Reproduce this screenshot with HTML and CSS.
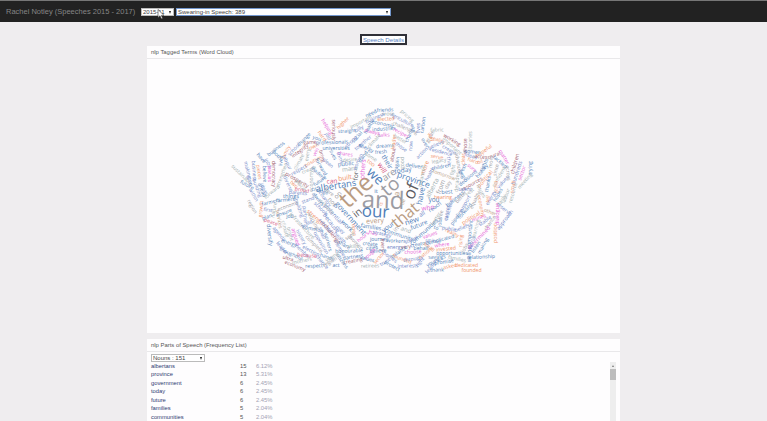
FILE: index.html
```html
<!DOCTYPE html>
<html lang="en">
<head>
<meta charset="utf-8">
<title>Rachel Notley (Speeches 2015 - 2017)</title>
<link rel="stylesheet" href="styles.css">
</head>
<body>
<header class="bar">
  <h1 class="title">Rachel Notley (Speeches 2015 - 2017)</h1>
  <div class="select month"><span>2015-11</span><i class="arrow"></i>
    <svg class="cursor" width="8" height="11" viewBox="0 0 8 11"><path d="M1 .5v8l2-1.7 1.3 3 1.3-.6-1.3-2.8H7z" fill="#fff" stroke="#333" stroke-width=".6"/></svg>
  </div>
  <div class="select speech"><span>Swearing-in Speech: 389</span><i class="arrow"></i></div>
</header>
<main class="content">
  <button class="details">Speech Details</button>
  <section class="panel cloud-panel">
    <h2>nlp Tagged Terms (Word Cloud)</h2>
    <svg id="cloud" class="cloud" width="473" height="274" viewBox="147 59 473 274"></svg>
  </section>
  <section class="panel list-panel">
    <h2>nlp Parts of Speech (Frequency List)</h2>
    <div class="select pos"><span>Nouns : 151</span><i class="arrow"></i></div>
    <div class="list">
      <table>
        <tr><th>albertans</th><td>15</td><td>6.12%</td></tr>
        <tr><th>province</th><td>13</td><td>5.31%</td></tr>
        <tr><th>government</th><td>6</td><td>2.45%</td></tr>
        <tr><th>today</th><td>6</td><td>2.45%</td></tr>
        <tr><th>future</th><td>6</td><td>2.45%</td></tr>
        <tr><th>families</th><td>5</td><td>2.04%</td></tr>
        <tr><th>communities</th><td>5</td><td>2.04%</td></tr>
      </table>
      <div class="scroll"><i class="up"></i><i class="thumb"></i></div>
    </div>
  </section>
</main>
<script src="cloud.js"></script>
</body>
</html>
```

FILE: styles.css
```css
* { box-sizing: border-box; }
body {
  margin: 0;
  height: 421px;
  overflow: hidden;
  background: #efedef;
  font-family: "Liberation Sans", Arial, sans-serif;
  font-size: 7px;
  color: #555;
}
.bar {
  display: flex;
  align-items: center;
  height: 22px;
  padding: 1px 0 0 6px;
  background: #222;
  border-top: 1px solid #777;
}
.title {
  width: 135px;
  margin: 0;
  font-size: 7.5px;
  font-weight: 400;
  line-height: 10px;
  color: #858585;
  white-space: nowrap;
}
.select {
  position: relative;
  display: flex;
  align-items: center;
  justify-content: space-between;
  height: 8px;
  padding: 0 2px 0 1px;
  background: #fff;
  border: 1px solid #bbb;
  color: #444;
  font-size: 6px;
  line-height: 7px;
  white-space: nowrap;
}
.arrow {
  border: 1.5px solid transparent;
  border-top: 3px solid #222;
  border-bottom: 0;
}
.month { width: 33px; margin-right: 2px; }
.speech { width: 215px; border-color: #7397cd; }
.cursor { position: absolute; left: 15px; top: 0; }
.content {
  display: flex;
  flex-direction: column;
  align-items: center;
  width: 473px;
  margin: 12px 0 0 147px;
}
.details {
  width: 47px;
  height: 11px;
  margin: 0 0 1px;
  padding: 0;
  border: 2px solid #303038;
  background: #fff;
  color: #5a83c4;
  font: 6.1px/7px "Liberation Sans", Arial, sans-serif;
  white-space: nowrap;
}
.panel { width: 473px; background: #fefdfe; }
.panel h2 {
  height: 13px;
  margin: 0;
  padding-left: 4px;
  border-bottom: 1px solid #e9e8ea;
  font-size: 5.9px;
  font-weight: 400;
  line-height: 13px;
  color: #555;
}
.cloud-panel { height: 287px; }
.cloud { display: block; }
.cloud text { font-family: "Open Sans", "Noto Sans", sans-serif; text-anchor: middle; }
.list-panel { height: 100px; margin-top: 6px; }
.pos { width: 54px; margin: 2px 0 0 4px; }
.list {
  display: flex;
  justify-content: space-between;
  height: 80px;
  margin: 0 4px;
}
table { border-collapse: collapse; height: 59px; font-size: 5.8px; }
tr { height: 8.35px; }
th, td { padding: 0; line-height: 8.35px; text-align: left; }
th { width: 89px; font-weight: 400; color: #2f3a70; }
td { width: 16px; color: #555; }
td:last-child { width: 30px; color: #a3a2b4; }
.scroll {
  display: flex;
  flex-direction: column;
  align-items: center;
  width: 6px;
  background: #eee;
}
.up { margin: 3px 0 2px; border: 1.5px solid transparent; border-bottom: 2px solid #777; border-top: 0; }
.thumb { width: 6px; height: 11px; background: #bdbdbd; }
```

FILE: cloud.js
```js
// word, centre x, centre y, angle, colour key, optional font size
const palette = { b: '#4f7db8', B: '#7188c8', g: '#9fb0b1', G: '#9c9ca3', o: '#f0936a', p: '#e664d6', r: '#a0606e', R: '#d5587f', t: '#b99b82', d: '#5c5c62' };
const words = `
the 356.5 191.5 -43 t 24
and 383 201 2 G 24
our 375.5 212 3 b 17
to 390.5 187 -40 G 19
of 411.5 191.5 -66 d 17
that 405.5 215.5 -40 t 16
we 375 176.5 43 b 13.5
are 389 175 -35 G 9.5
province 413.5 180 19 b 8.5
albertans 336 186 -9 b 9.3
government 350.5 218.5 48 b 7.5
in 357.5 213 -38 d 10
every 375 221 -4 t 7
families 371 227 9 b 5.8
new 412 221 -18 b 7.5
future 419 225 -22 b 6.2
have 421 196 -78 b 8
who 428 208 -8 p 6.5
your 388 227 -37 b 6.5
community 399 235 18 b 5.7
communities 424 232 -43 b 6
others 363 169 -86 p 6.5
will 382 168 58 R 7
their 387 162 60 b 7
built 345 178 -8 o 6.7
can 332 181.5 -4 R 6.5
for 356 176 -85 d 6.5
today 403 170.5 -8 b 6.5
many 350 169 -6 g 6.2
public 346 164 -6 b 5.8
deliver 414 166 8 b 5.5
too 371 163 38 o 5.5
it 376 191 0 b 6
a 397 194 -80 t 8
is 381 204 -70 o 5
on 338 195 -45 G 6.5
alberta 432.5 188 -62 g 6.5
best 447 192 -4 b 5.5
you 434 200 0 b 6.5
they 340 230 35 B 5
work 347 226 45 b 6
potential 333 214 47 B 6
because 331 223 52 B 6
from 441 187 -70 G 6.5
not 332 202 50 G 6
be 403 202 -70 t 5
has 373 233 15 p 5.5
reach 435 207 -35 b 5.5
all 422 214 -30 B 6
sustainable 241.7 175 45 g
making 247.5 170 77 B
business 254 171 86 B
pieces 259 172 80 o
have 261 158 50 b
believe 264.5 174 88 b
served 269.5 174 -90 p
democracy 274 174 90 r
business 276 149 -38 b
both 277 155 48 b
family 286 152.5 -62 o
school 294 149.5 -48 B
change 304 139.5 -45 b
game 310 142.5 -5 r
helping 327 127 58 p
seriously 334 130 90 r
hard 322 136 55 o
you 317 138.5 20 b
job 328 136.5 60 B
integrity 300 151 -35 r
own 314 146.5 -25 o
every 307.5 155 -80 g
win 316 152 -65 p
bring 322 156 75 r
positive 313 161.5 -28 o
professionals 332 142.5 -2 b 5.2
universities 336 148 0 b
lives 281 161 -86 b
jobs 268 163 60 B
strengthen 282 175 -70 g
labour 287 162.5 65 B
climate 299 162 -62 g
prosperity 297 180 30 r 5.5
respect 299 170 -30 B
create 309 170 -20 g
forward 321 167 60 b
clean 328 163 42 B
leaders 318 173 43 b
economy 311 181 -90 g
diverse 288 184 65 B
two 294 184.5 45 o
places 301 186 50 g
future 320 181 -35 b
future 247 185 30 b
building 257 188 70 B
ideas 264 189 65 B
higher 343 123 -45 o
important 361 122 -28 g
need 371 113.5 -25 b
friends 385 110 -3 b
pricing 407 116 42 g
agriculture 402 120 28 B
elected 386 119 -3 o
more 388 114 -2 g
business 375 118 -25 B
economic 383 124 12 b
industries 384 129 -4 b
challenging 405 128 22 G
always 372 132 12 p
talks 384 135 -2 p
straight 347 131 -3 b
billy 359 129 -30 B
health 369 127 -60 b
recipes 401 133 28 p
social 357 137 -48 b
strong 351 142 -45 B
together 363 143 -40 B
climate 374 141 -48 g
energy 366 148 25 b
dreams 385 146 -4 b
fresh 381 152 -4 b
better 400 139 30 g
leader 394 142 -85 o
those 401 147 35 B
about 393 155 -80 r
change 410 134 -65 b
lives 418 128 -90 B
carbon 423 125 -82 b
now 411 146 -85 B
shares 345 154 8 p
desire 350 160 -4 g
lives 333 155 60 b
think 340 158 70 B
stand 363 157 -55 b
women 358 162 -65 B
some 371 157 35 g
again 397 163 -80 b
good 402 163 -90 g
action 422 153 -45 B
over 425 143 60 b
great 430 137 -60 G
fabric 437 130 -2 g
way 431 137 60 o
reality 438 140 20 o
believe 436 145 -25 B
residence 441 152 14 B
working 452 140 32 r 5.2
important 452 146 42 g
create 449 150 30 B
serve 437 157 10 o
legacy 439 161 -10 g
children 441 167 -10 b
this 449 161 85 B
more 425 168 -70 o 6
balanced 422 176 -80 g
health 430 174 -60 B
whose 465 146 -90 r
libraries 470 141 -90 g
women 472 152 5 b
ideas 471 156 18 B
hopeful 484 151 -35 o
access 482 157 5 r
rural 495 155 -20 r
matter 504 157 58 p
tackled 500 162 42 b
children 515 164 -75 r 5.5
trying 530 168 -90 b
hundreds 517 173 -72 B 5.5
sector 522 173 -70 p 5.3
meeting 525 181 -48 g
mom 491 162 -85 G
since 496 170 -78 G
across 508 173 85 G
clear 463 159 -90 o
advance 458 162 80 G
hard 473 161 20 o
oil 480 162 -20 o
sure 472 168 42 p
fresh 463 169 -60 b
rights 484 165 -65 b
history 482 171 -50 b
decisions 468 178 -40 b
political 485 179 -50 o 5.8
confident 499 177 -60 g
resources 472 184 -30 r
thanks 488 184 -80 b
fiscal 496 187 85 o
values 503 182 -50 B
small 513 187 -80 o
tomorrow 444 175 20 t
fight 453 170 -80 g
day 448 185 -60 G
decades 457 182 -85 g
begin 463 176 60 b
step 250 181 75 B
within 253.5 195 60 B
region 252 206.5 60 G
growth 261 209 -85 o
ahead 262 190 70 b
things 291 196 0 b 5.6
forward 272 192 -40 g
farmers 285.5 200 -5 b
farmers 271 202 -15 b
first 268 210 10 B
nature 274 210 -80 g
plan 267 217 -20 b
peace 271 222 20 R
economy 288 206 -20 G
services 279 219 80 t
ensure 284 213 -20 b
job 290 216 0 b
building 299 208 70 B
stand 308 200 -20 B
parents 298 193 5 B
proud 302 190 10 R
climate 285 229 75 g
infrastructure 302 226 47 g 5.4
partner 305 215 85 B
strength 316 218 42 o 5.8
schools 321 209 45 B
working 313 221 60 G
build 307 224 -30 B
common 313 229 12 b
diversify 269.5 235 84 b 5.6
agenda 279 234 50 B
bright 290 234 75 g
argued 295.5 237 73 p 5.6
history 301 237 60 B
energy 289 243 20 b
leader 282 248 50 B
thoughtful 291 254 25 b
member 302 251 45 B
election 311 251 28 B
opposition 321 243 60 B
workers 328 242 75 b
complete 314 244 45 G
ultra 288 258.5 15 r
economy 295 266 22 r
because 307 255.5 4 R
mothers 302 261 -12 g
respect 314 266 -2 b
chance 322 262 50 B
hands 327 257 20 b
region 330 262 -30 G
challenge 332 234 52 r 5.5
health 340 238 45 B
small 322 233 70 B
rebuild 325 226 50 B
schools 327 207 45 g
always 318 199 50 b
country 325 199 55 B
change 320 191 15 b
here 329 192 40 G
seek 350 236 -35 G
women 356 243 45 G
hours 363 237 -40 p
open 354 230 85 o
share 344 245 30 b
skills 353 246 0 g
honourable 349 251 -2 b
member 340 249 60 B
partners 353 257 -8 b
creating 353 261 -10 r
citizens 342 261 55 b
act 336 265 0 b
young 332 257 -30 g
journey 379 239 0 b
create 370 244 5 b
cities 372 248 -8 b
every 382.5 245 90 r
believe 378 251 -4 b
tough 370 254 -45 p
values 367 259 15 b
sector 379 258 -50 o
trust 385 262 -30 B
retirees 370 266 -2 g
workers 396 241 3 b
strategy 382 234 12 B
energy 395 247 0 B
very 406 247 -5 r
creators 420 244 -12 b
behalf 421 248 0 b
choose 413 252 -3 p
balance 399 252 -35 b
founded 402 259 20 o
homes 390 257 35 B
protect 392 266 28 b
interests 408 266 -2 B
through 413 259 -10 B
nations 426 253 -40 o
right 420 262 -50 B
leaders 432 266 -50 B
and 406 230 20 g 6
in 396 229 -50 G 6
values 430 235 -20 p
united 433 241 8 B
social 411 240 -20 B
small 429 247 40 o
complicated 440 240 -15 b
where 442 245 -8 p
invested 446 249 -6 o
opportunities 452 253 0 b 5
savings 437 257 -2 b
families 457 259 12 g
promise 444 262 -8 b
young 433 262 -30 b
thank 437 270 -2 b
asked 450 266.5 -12 o
dedicated 466.5 265 0 o 5
founded 471.5 270 0 o
relationship 481 257 -3 b
wellness 469 252 -90 b
jobs 465 248 -60 G
rising 461 241 -85 o
reality 452 233 25 o
public 449 229 10 B
jobs 440 222 -85 b
to 436 228 20 b
free 441 215 -80 G
cancer 447 213 -80 B
better 436 219 -60 g
business 455 199 -40 b 5.4
better 461 197 -50 G
teachers 449 210 -75 B
pipeline 457 217 -55 b
forward 465 211 -50 b
support 465 204 -60 B
equality 475 200 -65 G
political 471 218 -32 o 5.7
mines 479 218 -20 p
economy 481 206 80 o
other 490 212 20 t
beliefs 462 228 -20 B
important 470 232 -85 b
learning 476 229 -75 g
stable 485 221 -35 B
chance 490 223 -55 G
dialogue 497 214 -90 p 5.6
reserve 504 209 40 B
approach 505 220 -52 B 5.3
position 495 233 -90 o 5.4
determined 479 238 -46 p 5.5
listen 476 247 -55 b
making 483 246 -62 b
world 472 243 -70 B
energy 491 198 -60 B
hopes 498 195 -60 b
fairly 502 200 -60 g
labour 506 196 -70 g
tell 488 199 -80 o
resource 513 193 -75 g
rest 470 192 -40 g
talent 465 189 0 B
issues 481 191 60 g
hearing 443 197 0 o
`.trim().split('\n');

const svg = document.getElementById('cloud');
for (const line of words) {
  const [word, x, y, angle, colour, size = 5.1] = line.split(' ');
  const el = document.createElementNS('http://www.w3.org/2000/svg', 'text');
  el.textContent = word;
  el.setAttribute('transform', `translate(${x} ${y}) rotate(${angle})`);
  el.setAttribute('dy', '.3em');
  el.setAttribute('font-size', size);
  el.setAttribute('fill', palette[colour]);
  svg.appendChild(el);
}
```
